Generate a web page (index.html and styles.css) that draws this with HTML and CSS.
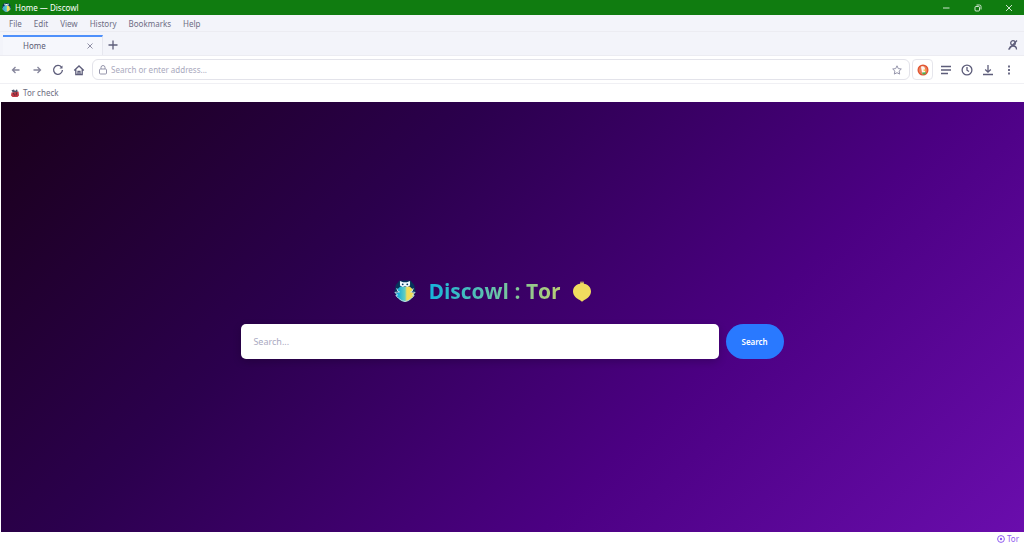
FILE: index.html
```
<!DOCTYPE html>
<html lang="en">

<head>
    <meta charset="UTF-8">
    <link rel="stylesheet" href="styles.css">

    <title>Home — Discowl</title>
</head>

<body>
    <!-- shared owl drawing, used in the title bar and in the heading -->
    <svg class="defs" aria-hidden="true">
        <defs>
            <linearGradient id="owl_body">
                <stop offset="0.1" stop-color="#12a9dc" />
                <stop offset="0.5" stop-color="#62cfc0" />
                <stop offset="0.6" stop-color="#f0dc5a" />
                <stop offset="1" stop-color="#f3dd55" />
            </linearGradient>
            <symbol id="owl" viewBox="0 0 24 24">
                <path d="M6 .500h12l4 5 1.500 7-2 6-5.500 5H8l-5.500-5-2-6L2 5.500z" fill="#06335a" />
                <path d="M7 7h10l4 3.500-2 2.500 3 2-2 4-4 3-3 1.500h-2L8 22l-4-3-2-4 3-2-2-2.500z" fill="url(#owl_body)" />
                <path d="M3 9l1 3 2 1-5 .500 3 3-2 .500 3 3 3.500 2.500L12 23.500l3.500-1L19 20l3-3-2-.500 3-3-5-.500 2-1 1-3" fill="none" stroke="#c9e4ee" stroke-width="1" />
                <path d="M6.500 1L10 2.500h4L17.500 1v5L14.500 7.500l-2.500-1-2.500 1-3-1.500z" fill="#eefaff" />
                <circle cx="9.500" cy="4.700" r="1" fill="#06335a" />
                <circle cx="14.500" cy="4.700" r="1" fill="#06335a" />
            </symbol>
        </defs>
    </svg>

    <div class="window">
        <header class="title_bar">
            <svg class="app_icon"><use href="#owl" /></svg>
            <span class="window_title">Home — Discowl</span>
            <button class="window_button" aria-label="Minimize">
                <svg viewBox="0 0 8 8"><path d="M0 4h6.500" /></svg>
            </button>
            <button class="window_button" aria-label="Restore">
                <svg viewBox="0 0 8 8"><rect x="1" y="2.500" width="4.500" height="4.500" rx="1" /><path d="M2.500 1h3a1.500 1.500 0 0 1 1.500 1.500v3" /></svg>
            </button>
            <button class="window_button" aria-label="Close">
                <svg viewBox="0 0 8 8"><path d="M1 1l6 6M7 1L1 7" /></svg>
            </button>
        </header>

        <nav class="menu_bar">
            <button>File</button>
            <button>Edit</button>
            <button>View</button>
            <button>History</button>
            <button>Bookmarks</button>
            <button>Help</button>
        </nav>

        <div class="tab_bar">
            <div class="tab">
                <span class="tab_title">Home</span>
                <button class="tab_close" aria-label="Close tab">
                    <svg viewBox="0 0 6 6"><path d="M0.500 0.500l5 5M5.500 0.500l-5 5" /></svg>
                </button>
            </div>
            <button class="icon_button new_tab" aria-label="New tab">
                <svg viewBox="0 0 12 12"><path d="M6 1.500v9M1.500 6h9" /></svg>
            </button>
            <button class="icon_button private" aria-label="Private profile">
                <svg viewBox="0 0 12 12"><circle cx="6" cy="4" r="2.300" /><path d="M2.500 10.500C2.500 7.500 4 7 6 7s3.500.500 3.500 3.500M1.500 10.500L10 1.500" /></svg>
            </button>
        </div>

        <div class="toolbar">
            <button class="icon_button muted" aria-label="Back">
                <svg viewBox="0 0 12 12"><path d="M9.500 6H2.500M5.500 3L2.500 6l3 3" /></svg>
            </button>
            <button class="icon_button muted" aria-label="Forward">
                <svg viewBox="0 0 12 12"><path d="M2.500 6h7M6.500 3l3 3-3 3" /></svg>
            </button>
            <button class="icon_button" aria-label="Reload">
                <svg viewBox="0 0 12 12"><path d="M9.500 3.200A4.400 4.400 0 1 0 10.400 6" /><path d="M7.500 4.400h3V1.400z" fill="currentColor" stroke="none" /></svg>
            </button>
            <button class="icon_button" aria-label="Home">
                <svg viewBox="0 0 12 12"><path d="M1.200 6.500L6 2l4.800 4.500M2.800 5.500v5h6.400v-5M5 10.500V7.500h2v3" /></svg>
            </button>

            <label class="address_bar">
                <svg class="lock" viewBox="0 0 10 10"><rect x="1.500" y="4" width="7" height="5" rx="1" /><path d="M3 4V2.500a2 2 0 0 1 4 0V4" /></svg>
                <input type="text" class="address" placeholder="Search or enter address..." aria-label="Address">
                <svg class="star" viewBox="0 0 10 10"><path d="M5 0.800l1.300 2.800 3 .400-2.200 2.100.600 3L5 7.700 2.300 9.100l.600-3L0.700 4l3-.400z" /></svg>
            </label>

            <button class="engine" aria-label="Search engine">
                <svg viewBox="0 0 12 12"><circle cx="6" cy="6" r="5.500" fill="#e0522d" /><circle cx="6" cy="6" r="4.300" fill="#ea805f" /><path d="M4 2.700C6 1.500 8 2.800 8 5l.300 4.800-3 .400z" fill="#fff6ef" /><path d="M6.500 5.500h2.500v1.300h-2.500z" fill="#f9bc2c" /><path d="M5 8.500l4-.300-.500 2-3 .200z" fill="#4caf50" /></svg>
            </button>
            <button class="icon_button" aria-label="Reading list">
                <svg viewBox="0 0 12 12"><path d="M1 2.500h10M1 6h10M1 9.500h7" /></svg>
            </button>
            <button class="icon_button" aria-label="History">
                <svg viewBox="0 0 12 12"><circle cx="6" cy="6" r="4.900" /><path d="M6 3v3.200l2 1.300" /></svg>
            </button>
            <button class="icon_button" aria-label="Downloads">
                <svg viewBox="0 0 12 12"><path d="M6 1v7M3.200 5.500L6 8.200l2.800-2.700M1 10.500h10" /></svg>
            </button>
            <button class="icon_button" aria-label="Menu">
                <svg viewBox="0 0 12 12"><path d="M6 1.500v2M6 5v2M6 8.500v2" stroke-width="1.800" /></svg>
            </button>
        </div>

        <div class="bookmarks">
            <a href="#" class="bookmark">
                <svg viewBox="0 0 8 8"><path d="M.500 3.500l7-1 .500 4L6.500 8h-5L0 6.500z" fill="#c23a45" /><path d="M3 .500l1 1.500L6 .300l.800 2.500-5 .700L.500 1.200z" fill="#4c5369" /><path d="M2.500 4l1 2.500M5.500 3.500L5 6.500" stroke="#5a2738" /></svg>
                Tor check
            </a>
        </div>

        <main class="page">
            <h1 class="title">
                <svg class="logo"><use href="#owl" /></svg>
                <span class="title_text">Discowl : Tor</span>
                <svg class="onion" viewBox="0 0 20 24"><path d="M8 1l1 2.500 1-3 1 3L12 1v3c4.500.500 8 4 8 8.500 0 5-4.500 8-7.500 9.500L10 24l-2.500-2C4.500 20.500 0 17.500 0 12.500 0 8 3.500 4.500 8 4z" fill="#f0dc5f" /></svg>
            </h1>
            <form class="search_form" onsubmit="return false">
                <input type="text" class="search_input" placeholder="Search..." aria-label="Search">
                <button class="search_button">Search</button>
            </form>
        </main>

        <footer class="status_bar">
            <svg viewBox="0 0 8 8"><circle cx="4" cy="4" r="3.400" /><circle cx="4" cy="4" r="1.200" fill="currentColor" stroke="none" /></svg>
            <span>Tor</span>
        </footer>
    </div>
</body>

</html>
```
FILE: styles.css
```
* {
    box-sizing: border-box;
}

body {
    margin: 0;
    font-family: "Noto Sans", "Open Sans", sans-serif;
    font-size: 8px;
    line-height: 12px;
    color: #5b5b74;
    background: #ffffff;
}

button,
input {
    margin: 0;
    padding: 0;
    border: none;
    background: none;
    font: inherit;
    color: inherit;
}

svg {
    display: block;
    flex: none;
    fill: none;
    stroke: currentColor;
}

.defs {
    position: absolute;
    width: 0;
    height: 0;
}

.window {
    display: flex;
    flex-direction: column;
    height: 100vh;
}

/* title bar */
.title_bar {
    display: flex;
    align-items: center;
    height: 15px;
    padding-left: 2px;
    background: #107c10;
    color: #ffffff;
}

.app_icon {
    width: 9px;
    height: 9px;
    margin-right: 4px;
    stroke: none;
}

.window_title {
    flex: 1;
}

.window_button {
    display: flex;
    align-items: center;
    justify-content: center;
    width: 31px;
    height: 15px;
}

.window_button svg {
    width: 8px;
    height: 8px;
    stroke-width: 0.8;
}

/* menus */
.menu_bar {
    display: flex;
    gap: 12px;
    height: 17px;
    padding: 1px 9px 0;
    border-bottom: 1px solid #ececf2;
    background: #f3f4fa;
    color: #6d6d84;
}

/* tabs */
.tab_bar {
    display: flex;
    align-items: center;
    height: 24px;
    padding: 3px 5px 0 3px;
    border-bottom: 1px solid #ececf2;
    background: #f3f4fa;
}

.tab {
    display: flex;
    align-items: center;
    width: 100px;
    height: 20px;
    padding: 0 9px 0 20px;
    border-top: 2px solid #4f90fb;
    border-right: 1px solid #e6e7ef;
    background: #f6f7fc;
}

.tab_title {
    flex: 1;
}

.tab_close svg {
    width: 6px;
    height: 6px;
    color: #8f8fa5;
}

.icon_button {
    display: flex;
    align-items: center;
    justify-content: center;
    width: 12px;
    height: 20px;
    color: #5d5d7a;
}

.icon_button svg {
    width: 12px;
    height: 12px;
    stroke-width: 1.3;
}

.new_tab {
    margin-left: 4px;
}

.private {
    margin-left: auto;
}

.muted {
    color: #85859b;
}

/* toolbar */
.toolbar {
    display: flex;
    align-items: center;
    gap: 9px;
    height: 28px;
    padding: 0 9px 0 10px;
    border-bottom: 1px solid #f0f0f4;
}

.address_bar {
    display: flex;
    flex: 1;
    align-items: center;
    height: 21px;
    margin: 0 -7px 0 -2px;
    padding: 0 7px 0 5px;
    border: 1px solid #e3e3ea;
    border-radius: 6px;
}

.address_bar svg {
    width: 10px;
    height: 10px;
    color: #9494aa;
}

.address {
    flex: 1;
    min-width: 0;
    padding: 0 3px;
}

.address::placeholder {
    color: #a9a9bd;
}

.engine {
    display: flex;
    align-items: center;
    justify-content: center;
    width: 21px;
    height: 21px;
    margin-right: -2px;
    border: 1px solid #e6e6ec;
    border-radius: 4px;
}

.engine svg {
    width: 12px;
    height: 12px;
    stroke: none;
}

/* bookmarks */
.bookmarks {
    display: flex;
    align-items: center;
    height: 18px;
    padding-left: 11px;
}

.bookmark {
    display: flex;
    align-items: center;
    gap: 4px;
    color: #6d6d80;
    text-decoration: none;
}

.bookmark svg {
    width: 8px;
    height: 8px;
    stroke: none;
}

/* page */
.page {
    display: flex;
    flex: 1;
    flex-direction: column;
    align-items: center;
    justify-content: center;
    gap: 17px;
    margin-left: 1px;
    background: linear-gradient(135deg, #1a001a, #2b004d, #4b0082, #6a0dad);
}

.title {
    display: flex;
    align-items: center;
    gap: 12px;
    margin: 0 40px 0 0;
    font-family: "Open Sans", "Noto Sans", sans-serif;
    font-size: 21px;
    line-height: 32px;
    font-weight: 700;
}

.title_text {
    background: linear-gradient(90deg, #14b5dc, #b9cf75);
    background-clip: text;
    -webkit-background-clip: text;
    color: transparent;
}

.logo {
    width: 22px;
    height: 24px;
    stroke: none;
}

.onion {
    width: 18px;
    height: 22px;
    stroke: none;
}

.search_form {
    display: flex;
    gap: 7px;
    width: 53%;
}

.search_input {
    flex: 1;
    min-width: 0;
    height: 35px;
    padding: 0 12px;
    border-radius: 5px;
    background: #ffffff;
    box-shadow: 0 3px 8px rgba(0, 0, 0, 0.2);
    font-size: 9px;
}

.search_input::placeholder {
    color: #aaaac2;
}

.search_button {
    width: 58px;
    height: 35px;
    border-radius: 18px;
    background: #2979ff;
    color: #ffffff;
    font-weight: 600;
}

/* status */
.status_bar {
    display: flex;
    align-items: center;
    justify-content: flex-end;
    gap: 2px;
    height: 11px;
    padding: 3px 5px 0 0;
    color: #8f5cf0;
}

.status_bar svg {
    width: 8px;
    height: 8px;
}
```
